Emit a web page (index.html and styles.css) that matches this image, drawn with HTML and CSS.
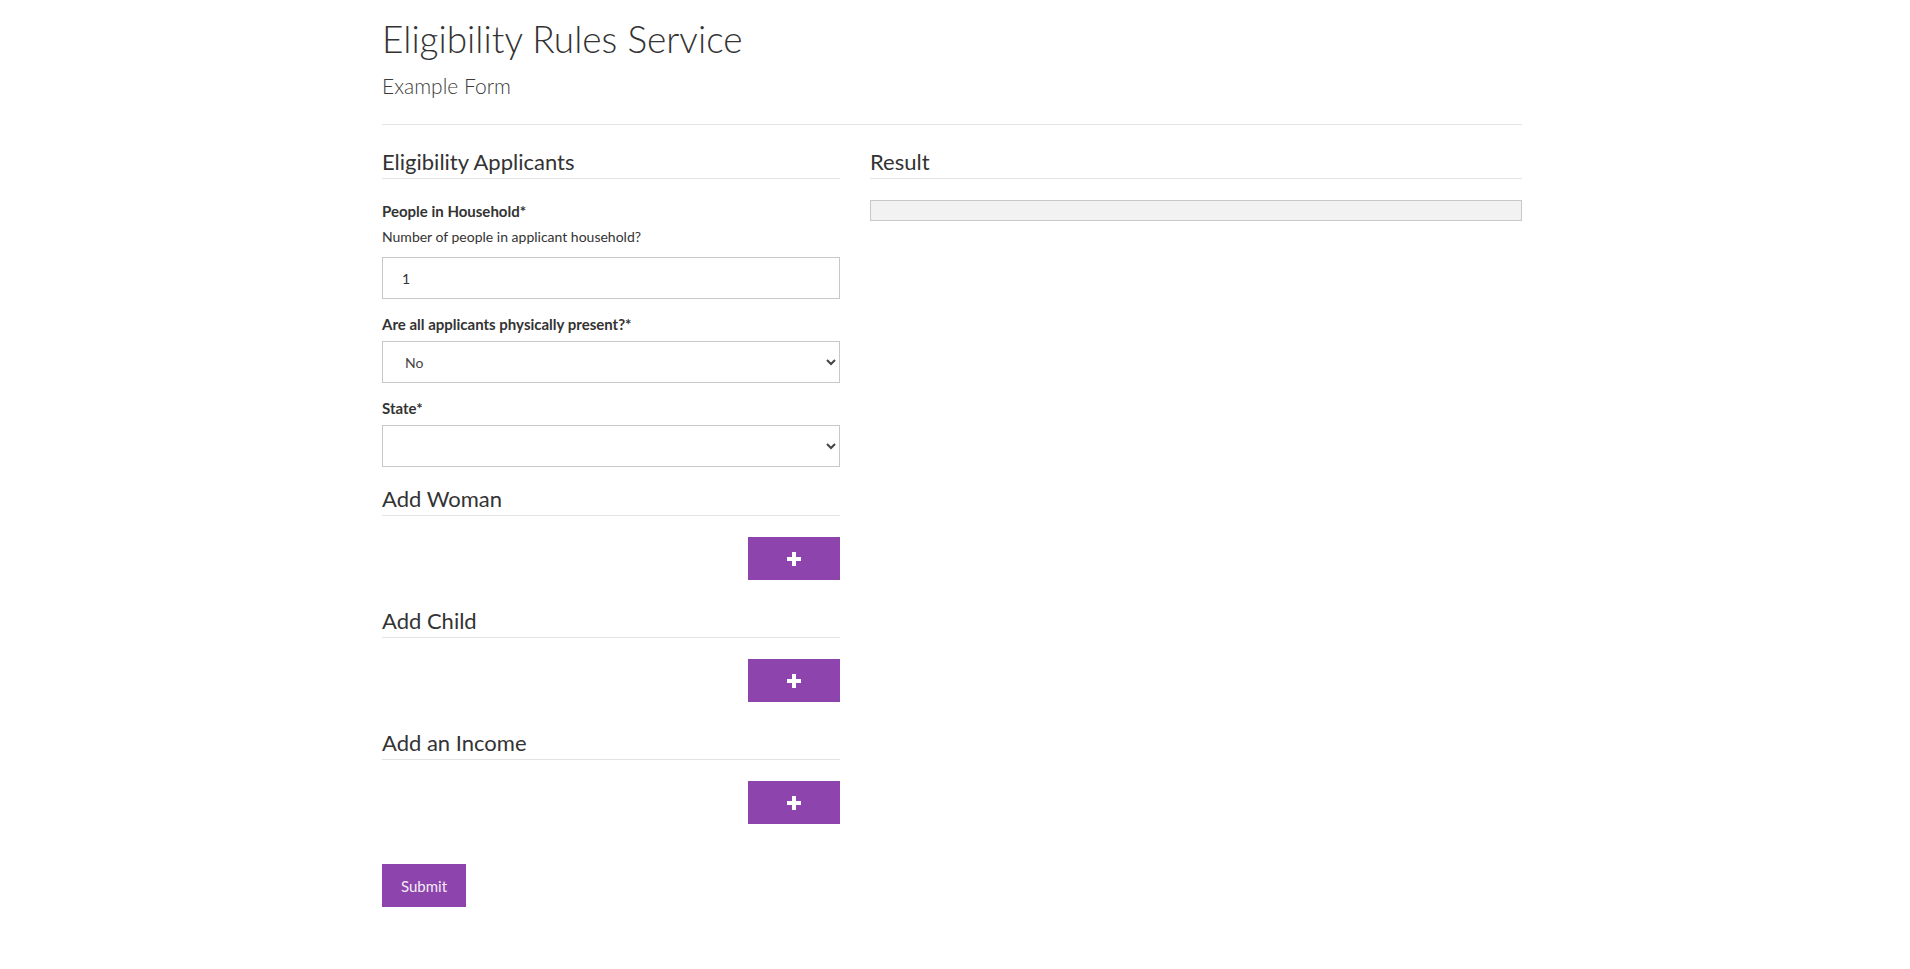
FILE: index.html
```html
<!DOCTYPE html>
<html lang="en">
<head>
<meta charset="utf-8">
<title>Eligibility Rules Service</title>
<link rel="stylesheet" href="styles.css">
</head>
<body>
<div class="container">
  <header class="page-header">
    <h1 class="title">Eligibility Rules Service</h1>
    <p class="subtitle">Example Form</p>
  </header>
  <div class="row">
    <form class="col-left">
      <h3 class="section-title">Eligibility Applicants</h3>
      <div class="field first">
        <label class="label" for="people">People in Household*</label>
        <p class="help">Number of people in applicant household?</p>
        <input class="input" id="people" type="text" value="1">
      </div>
      <div class="field">
        <label class="label" for="present">Are all applicants physically present?*</label>
        <select class="select" id="present">
          <option>No</option>
          <option>Yes</option>
        </select>
      </div>
      <div class="field">
        <label class="label" for="state">State*</label>
        <select class="select" id="state">
          <option></option>
        </select>
      </div>

      <h3 class="section-title add add-first">Add Woman</h3>
      <div class="add-row">
        <button type="button" class="btn btn-add" aria-label="Add Woman">
          <svg width="14" height="14" viewBox="0 0 14 14"><path d="M5 0h4v5h5v4H9v5H5V9H0V5h5z" fill="#fff"/></svg>
        </button>
      </div>

      <h3 class="section-title add">Add Child</h3>
      <div class="add-row">
        <button type="button" class="btn btn-add" aria-label="Add Child">
          <svg width="14" height="14" viewBox="0 0 14 14"><path d="M5 0h4v5h5v4H9v5H5V9H0V5h5z" fill="#fff"/></svg>
        </button>
      </div>

      <h3 class="section-title add">Add an Income</h3>
      <div class="add-row">
        <button type="button" class="btn btn-add" aria-label="Add an Income">
          <svg width="14" height="14" viewBox="0 0 14 14"><path d="M5 0h4v5h5v4H9v5H5V9H0V5h5z" fill="#fff"/></svg>
        </button>
      </div>

      <button type="submit" class="btn btn-submit">Submit</button>
    </form>
    <section class="col-right">
      <h3 class="section-title">Result</h3>
      <div class="result"></div>
    </section>
  </div>
</div>
</body>
</html>
```

FILE: styles.css
```css
html, body {
  margin: 0;
  padding: 0;
  background: #fff;
}
body {
  padding-right: 6px;
  font-family: Lato, "Open Sans", sans-serif;
  color: #333;
}
.container {
  width: 1140px;
  margin: 0 auto;
}
.page-header {
  padding-top: 15px;
  border-bottom: 1px solid #e3e3e3;
  padding-bottom: 25px;
}
.title {
  margin: 0;
  font-size: 37px;
  line-height: 48px;
  font-weight: 300;
  color: #333;
}
.subtitle {
  margin: 10px 0 0;
  font-size: 21px;
  line-height: 26px;
  font-weight: 300;
  color: #3c3c3c;
}
.row {
  display: flex;
  gap: 30px;
  padding-top: 24px;
}
.col-left {
  width: 458px;
  flex: none;
}
.col-right {
  flex: 1;
}
.section-title {
  margin: 0;
  font-size: 22px;
  line-height: 26px;
  font-weight: 400;
  color: #333;
  padding-bottom: 3px;
  border-bottom: 1px solid #e3e3e3;
}
.section-title.add {
  margin-top: 28px;
}
.section-title.add-first {
  margin-top: 19px;
}
.field {
  margin-bottom: 15px;
}
.field.first {
  margin-top: 22px;
}
.label {
  display: block;
  font-size: 15px;
  line-height: 20px;
  font-weight: 700;
  margin-bottom: 7px;
}
.help {
  margin: -1px 0 10px;
  font-size: 14px;
  line-height: 20px;
}
.input,
.select {
  display: block;
  box-sizing: border-box;
  width: 100%;
  height: 42px;
  border: 1px solid #c8c8c8;
  border-radius: 0;
  background: #fff;
  font-family: Lato, "Open Sans", sans-serif;
  font-size: 14px;
  color: #333;
  margin: 0;
}
.input {
  padding: 0 19px;
}
.select {
  padding: 0 14px 0 18px;
  color: #444;
}
.add-row {
  display: flex;
  justify-content: flex-end;
  margin-top: 21px;
}
.btn {
  border: 0;
  border-radius: 0;
  background: #8e44ad;
  color: #fff;
  font-family: Lato, "Open Sans", sans-serif;
  cursor: pointer;
  margin: 0;
}
.btn-add {
  width: 92px;
  height: 43px;
  display: flex;
  align-items: center;
  justify-content: center;
  padding: 0;
}
.btn-submit {
  display: block;
  margin-top: 40px;
  width: 84px;
  height: 43px;
  font-size: 15px;
  color: #f3ecf6;
  padding: 0;
}
.result {
  margin-top: 21px;
  box-sizing: border-box;
  height: 21px;
  background: #f2f2f2;
  border: 1px solid #c8c8c8;
}
```
